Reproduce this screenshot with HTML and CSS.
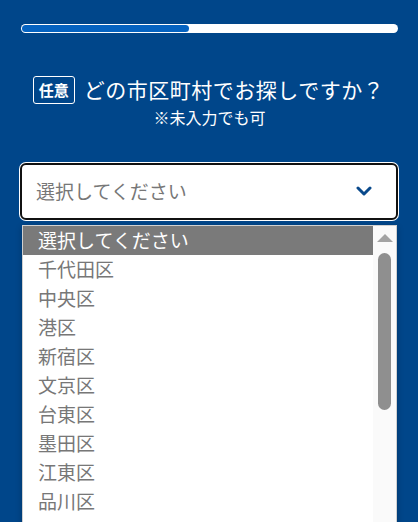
FILE: index.html
```html
<!DOCTYPE html>
<html lang="ja">
<head>
    <meta charset="UTF-8">
    <title>エリア選択</title>
    <link rel="stylesheet" href="styles.css">
</head>
<body>
    <div class="page">
        <div class="progress"><div class="progress-fill"></div></div>

        <div class="question">
            <div class="question-row">
                <span class="badge">任意</span>
                <span class="question-title">どの市区町村でお探しですか？</span>
            </div>
            <p class="question-note">※未入力でも可</p>
        </div>

        <div class="select-wrap">
            <div class="select-box">
                <span class="select-value">選択してください</span>
                <svg class="chevron" width="16" height="10" viewBox="0 0 16 10">
                    <polyline points="2,2 8,8 14,2" fill="none" stroke="#0a4a8c" stroke-width="3" stroke-linecap="round" stroke-linejoin="round"/>
                </svg>
            </div>

            <div class="dropdown">
                <ul class="options">
                    <li class="option selected">選択してください</li>
                    <li class="option">千代田区</li>
                    <li class="option">中央区</li>
                    <li class="option">港区</li>
                    <li class="option">新宿区</li>
                    <li class="option">文京区</li>
                    <li class="option">台東区</li>
                    <li class="option">墨田区</li>
                    <li class="option">江東区</li>
                    <li class="option">品川区</li>
                </ul>
                <div class="scrollbar">
                    <div class="scroll-arrow"></div>
                    <div class="scroll-thumb"></div>
                </div>
            </div>
        </div>
    </div>
</body>
</html>
```

FILE: styles.css
```css
html, body { margin: 0; height: 100%; overflow: hidden; }
body { background-color: #00468a; font-family: "Noto Sans CJK JP", "Noto Sans", sans-serif; color: #fff; }
.page { padding: 24px 20px 0 21px; }

.progress { height: 9px; width: 377px; background-color: #fff; border-radius: 5px; padding: 1px; box-sizing: border-box; }
.progress-fill { width: 167px; height: 100%; background-color: #0563c1; border-radius: 4px; }

.question { margin-top: 43px; text-align: center; }
.question-row { display: flex; justify-content: center; align-items: center; gap: 9px; margin-left: -2px; }
.badge { border: 1px solid #fff; border-radius: 3px; padding: 0 5px; height: 26px; line-height: 26px; font-size: 15px; font-weight: bold; }
.question-title { font-size: 21px; line-height: 28px; letter-spacing: 0.5px; margin-top: -3px; }
.question-note { margin: 0; font-size: 16px; line-height: 24px; margin-top: 1px; }

.select-wrap { margin-top: 34px; margin-left: -1px; }
.select-box { display: flex; align-items: center; justify-content: space-between; height: 57px; box-sizing: border-box; background-color: #fff; border: 2px solid #111; border-radius: 6px; box-shadow: 0 0 0 1px #fff; padding: 0 24px 0 14px; }
.select-value { font-size: 19px; color: #777; margin-top: -3px; }
.chevron { margin-top: -2px; }

.dropdown { display: flex; margin: 5px 1px 0 2px; height: 300px; background-color: #fff; border: 1px solid #d0d0d0; box-shadow: 0 2px 6px rgba(0, 0, 0, 0.25); }
.options { flex: 1; list-style: none; margin: 0; padding: 0; }
.option { height: 29px; line-height: 27px; padding-left: 15px; font-size: 19px; color: #777; }
.option.selected { background-color: #7a7a7a; color: #fff; }

.scrollbar { width: 23px; background-color: #fafafa; display: flex; flex-direction: column; align-items: center; }
.scroll-arrow { margin-top: 8px; width: 0; height: 0; border-left: 8px solid transparent; border-right: 8px solid transparent; border-bottom: 8px solid #a3a3a3; }
.scroll-thumb { margin-top: 11px; width: 13px; height: 157px; background-color: #8f8f8f; border-radius: 7px; }
```
